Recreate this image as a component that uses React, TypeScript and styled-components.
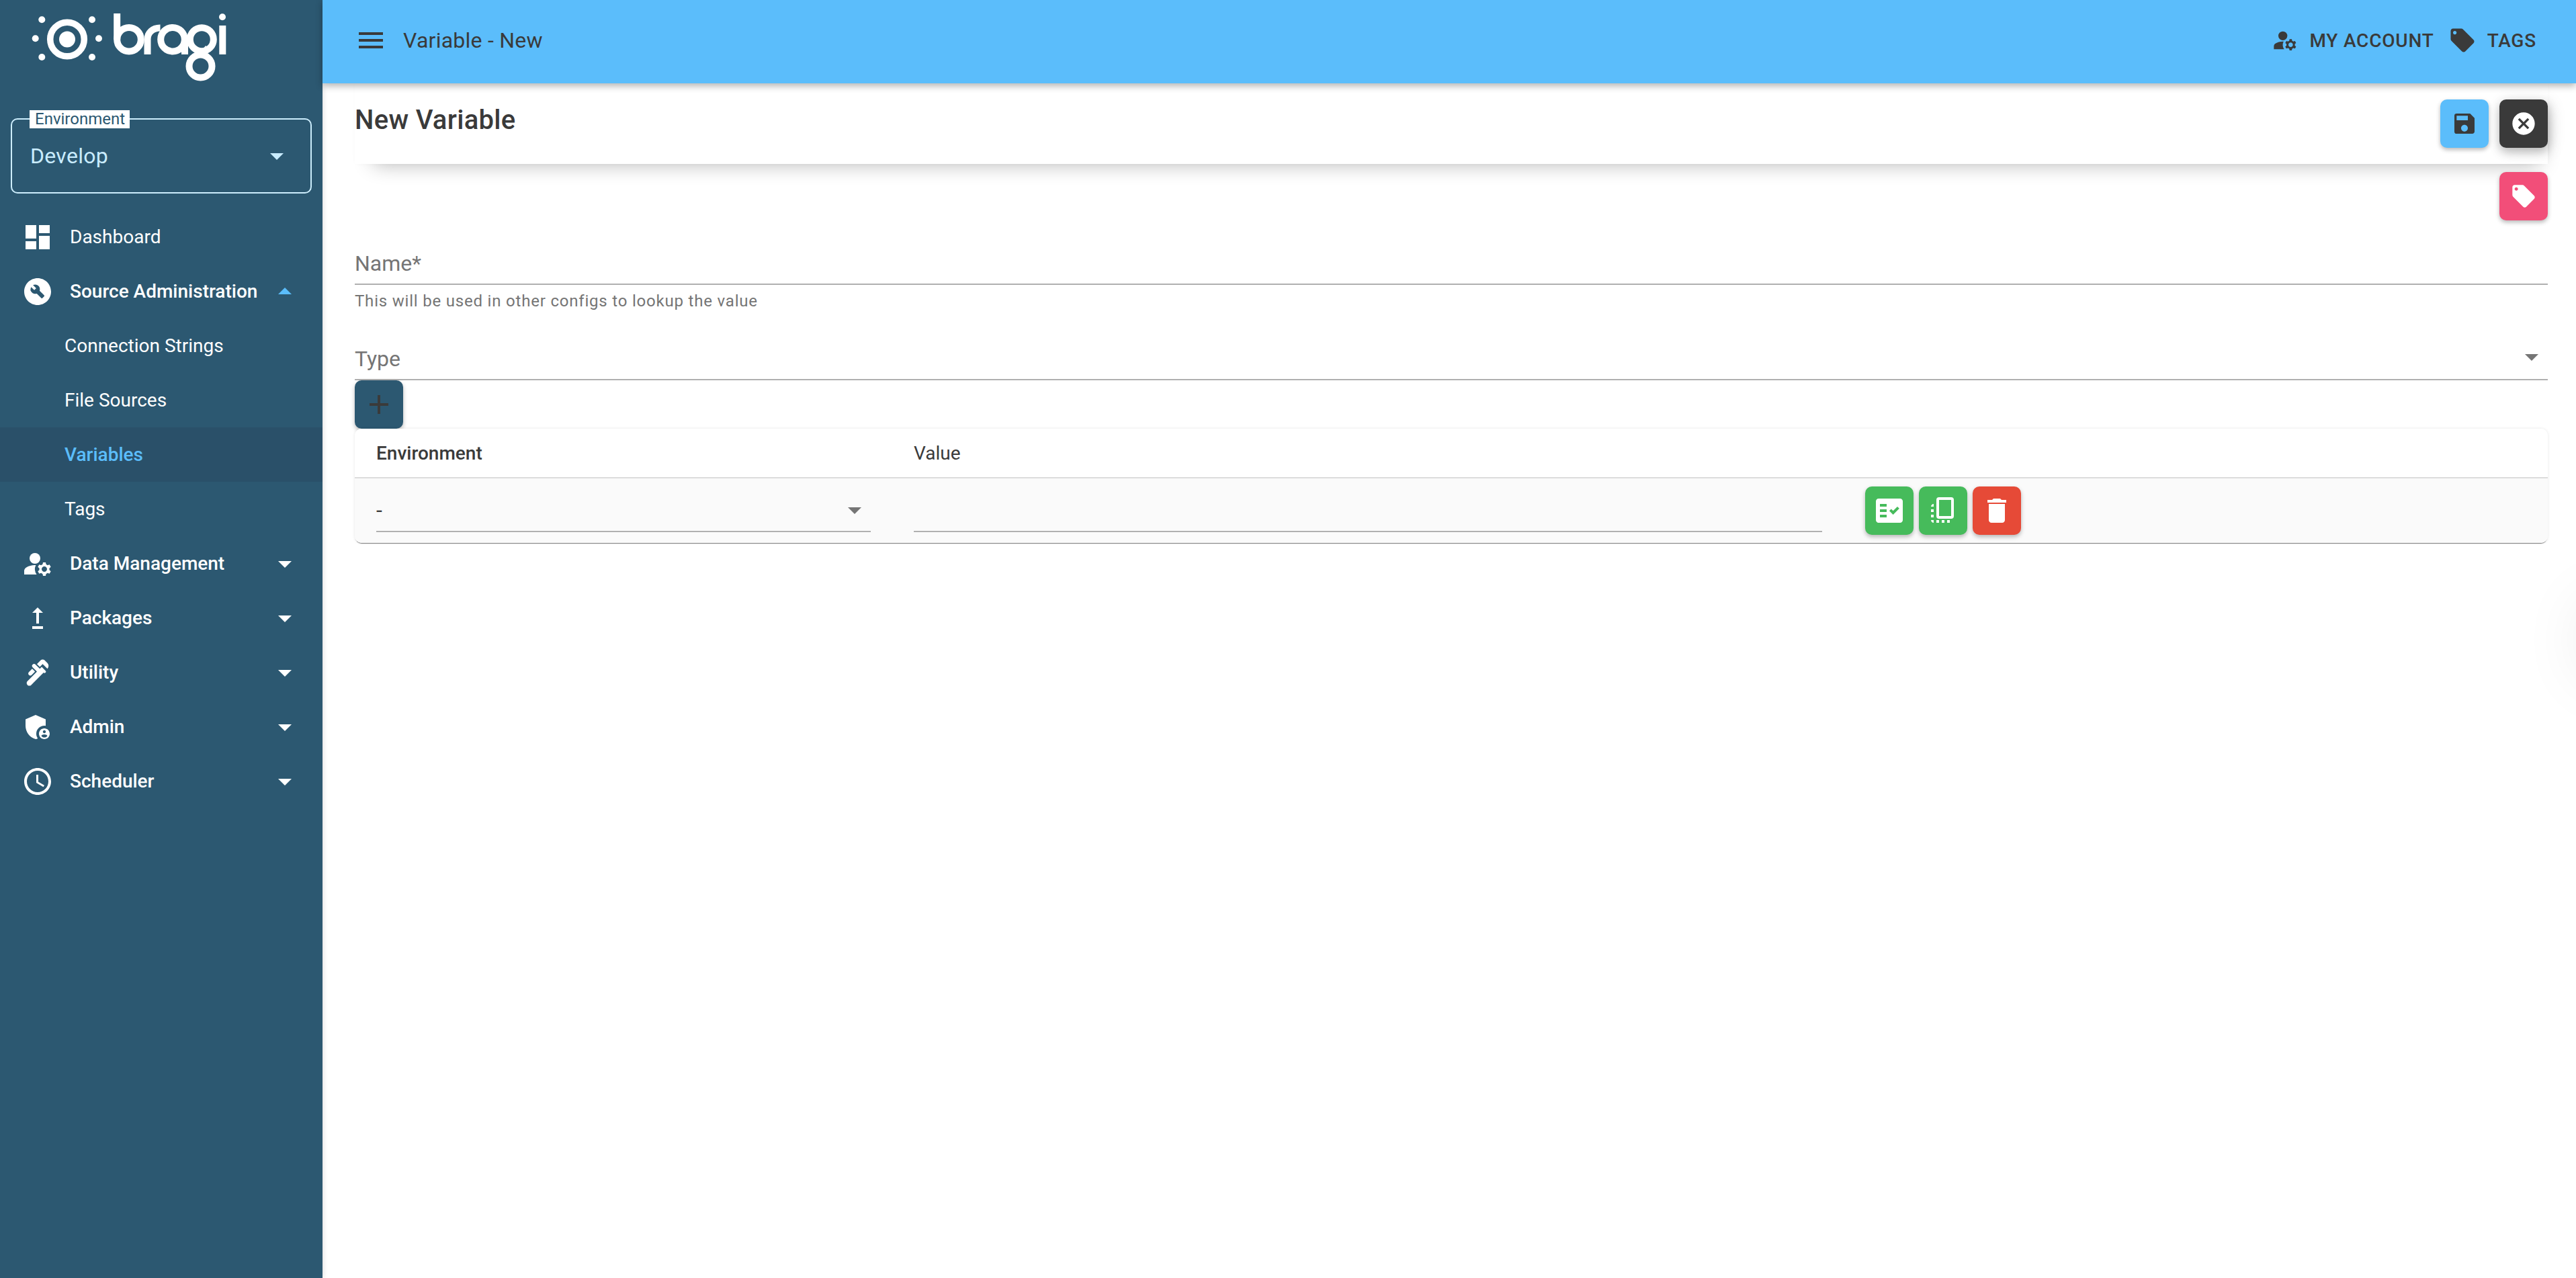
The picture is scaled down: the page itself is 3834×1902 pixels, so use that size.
import React from 'react';
import styled, { createGlobalStyle } from 'styled-components';
import {
	MdAdd,
	MdAdminPanelSettings,
	MdArrowDropDown,
	MdArrowDropUp,
	MdBuildCircle,
	MdCancel,
	MdDashboard,
	MdDelete,
	MdFactCheck,
	MdLocalOffer,
	MdManageAccounts,
	MdMenu,
	MdPlumbing,
	MdSave,
	MdSchedule,
	MdUpgrade,
} from 'react-icons/md';

const BLUE = '#5bbdfb';
const NAVY = '#2c5871';
const INK = '#3a3a3a';
const GREY = '#757575';

const GlobalStyle = createGlobalStyle`
	html, body, #root {
		height: 100%;
		margin: 0;
	}
	body {
		background: #fff;
		color: ${INK};
		font-family: Roboto, "Liberation Sans", sans-serif;
		overflow: hidden;
	}
`;

const Page = styled.div`
	display: flex;
	height: 100vh;
	position: relative;
	overflow: hidden;
`;

const Sidebar = styled.aside`
	width: 480px;
	flex: none;
	background: ${NAVY};
	box-shadow: 0 0 8px rgba(0, 0, 0, 0.18);
	display: flex;
	flex-direction: column;
	z-index: 1;
`;

const LogoMark = styled.svg`
	display: block;
	width: 310px;
	height: 115px;
	margin: 10px 0 0 40px;
	flex: none;
`;

const EnvSelect = styled.div`
	position: relative;
	box-sizing: border-box;
	width: 448px;
	height: 112px;
	margin: 51px 0 0 16px;
	padding: 0 26px 0 27px;
	border: 2px solid #cdeefd;
	border-radius: 10px;
	display: flex;
	align-items: center;
	justify-content: space-between;
	color: #c9ecff;
	font-size: 32px;
	letter-spacing: 0.3px;
`;

const EnvLabel = styled.span`
	position: absolute;
	left: 26px;
	top: -14px;
	height: 27px;
	line-height: 27px;
	padding: 0 7px 0 8px;
	background: #fff;
	color: ${NAVY};
	font-size: 24px;
	letter-spacing: 0;
`;

const Nav = styled.nav`
	margin-top: 24px;
	display: flex;
	flex-direction: column;
`;

const NavRow = styled.div<{ $active?: boolean; $sub?: boolean; $light?: boolean }>`
	height: 81px;
	display: flex;
	align-items: center;
	gap: 24px;
	padding: 0 32px 0 ${p => (p.$sub ? '96px' : '32px')};
	background: ${p => (p.$active ? '#2a5069' : 'transparent')};
	color: ${p => (p.$active ? BLUE : '#fff')};
	font-size: 28px;
	font-weight: ${p => ((p.$sub && !p.$active) || p.$light ? 400 : 500)};
	white-space: nowrap;

	svg {
		flex: none;
	}
`;

const NavLabel = styled.span`
	flex: 1;
	min-width: 0;
`;

const Content = styled.div`
	flex: 1;
	min-width: 0;
	display: flex;
	flex-direction: column;
`;

const AppBar = styled.header`
	height: 124px;
	flex: none;
	box-sizing: border-box;
	padding: 0 59px 4px 48px;
	background: ${BLUE};
	color: ${INK};
	display: flex;
	align-items: center;
	box-shadow: 0 4px 10px rgba(0, 0, 0, 0.3);
	position: relative;
	z-index: 2;
`;

const AppTitle = styled.h1`
	margin: 0 0 0 24px;
	font-size: 32px;
	font-weight: 400;
	line-height: 48px;
	letter-spacing: 0.24px;
`;

const AppLinks = styled.div`
	margin-left: auto;
	display: flex;
	align-items: center;
	gap: 21px;
`;

const AppLink = styled.span<{ $gap: number }>`
	display: flex;
	align-items: center;
	gap: ${p => p.$gap}px;
	font-size: 28px;
	font-weight: 500;
	letter-spacing: 0.8px;
	text-transform: uppercase;
`;

const Form = styled.main`
	flex: 1;
	padding: 0 42px 0 48px;
	display: flex;
	flex-direction: column;
`;

const TitlePanel = styled.section`
	height: 120px;
	flex: none;
	box-sizing: border-box;
	padding-top: 24px;
	display: flex;
	justify-content: space-between;
	align-items: flex-start;
	background: #fff;
	box-shadow: 8px 20px 30px -20px rgba(0, 0, 0, 0.3), 0 0 6px rgba(0, 0, 0, 0.02);
`;

const PanelTitle = styled.h2`
	margin: 0;
	font-size: 40px;
	font-weight: 500;
	line-height: 62px;
	letter-spacing: 0.3px;
`;

const PanelActions = styled.div`
	display: flex;
	gap: 16px;
`;

const SquareButton = styled.button<{ $bg: string; $fg: string; $raised?: boolean }>`
	width: 72px;
	height: 72px;
	flex: none;
	padding: 0;
	border: 0;
	border-radius: 10px;
	display: flex;
	align-items: center;
	justify-content: center;
	background: ${p => p.$bg};
	color: ${p => p.$fg};
	box-shadow: ${p =>
		p.$raised
			? '0 6px 14px rgba(0, 0, 0, 0.22), 4px 4px 24px rgba(0, 0, 0, 0.12)'
			: '0 3px 6px rgba(0, 0, 0, 0.28)'};
`;

const TagRow = styled.div`
	margin-top: 12px;
	display: flex;
	justify-content: flex-end;
`;

const Field = styled.div<{ $top: number }>`
	margin-top: ${p => p.$top}px;
	height: 56px;
	box-sizing: border-box;
	padding-bottom: 6px;
	border-bottom: 2px solid #b0b0b0;
	display: flex;
	align-items: center;
	justify-content: space-between;
	color: ${GREY};
	font-size: 32px;
`;

const FieldArrow = styled.span<{ $lift?: number }>`
	display: flex;
	margin-top: ${p => -(p.$lift ?? 0)}px;
	color: ${GREY};
`;

const Helper = styled.p`
	margin: 10px 0 0;
	font-size: 24px;
	line-height: 28px;
	letter-spacing: 0.8px;
	color: ${GREY};
`;

const AddRow = styled.div`
	display: flex;
`;

const Table = styled.section`
	border-radius: 10px;
	background: #fff;
	box-shadow: 0 2px 1px -1px rgba(0, 0, 0, 0.5), 0 0 4px rgba(0, 0, 0, 0.1);
	overflow: hidden;
`;

const TableRow = styled.div<{ $head?: boolean }>`
	display: grid;
	grid-template-columns: 736px 1352px auto;
	column-gap: 64px;
	align-items: center;
	height: ${p => (p.$head ? '72px' : '96px')};
	padding-left: 32px;
	background: ${p => (p.$head ? '#fff' : '#fafafa')};
	border-bottom: ${p => (p.$head ? '2px solid #dcdcdc' : '0')};
	font-size: 28px;
`;

const HeadCell = styled.div<{ $strong?: boolean }>`
	font-weight: ${p => (p.$strong ? 500 : 400)};
`;

const CellInput = styled.div`
	height: 64px;
	box-sizing: border-box;
	border-bottom: 2px solid #b0b0b0;
	display: flex;
	align-items: center;
	justify-content: space-between;
	font-size: 32px;
	color: ${INK};
`;

const RowActions = styled.div`
	display: flex;
	gap: 8px;
`;

// a floating button parked just off the right edge, only its shadow shows
const OffscreenFab = styled.div`
	position: absolute;
	left: 3860px;
	top: 912px;
	width: 80px;
	height: 80px;
	border-radius: 50%;
	box-shadow: 0 0 110px rgba(0, 0, 0, 0.2);
`;

const BragiLogo = () => (
	<LogoMark viewBox="40 10 310 115" fill="none" stroke="#fff" strokeWidth="10">
		<circle cx="100" cy="58.5" r="25.3" strokeWidth="9.5" />
		<circle cx="100" cy="58.5" r="12" fill="#fff" stroke="none" />
		{[[62.3, 29.3], [137, 29.3], [52.7, 57.3], [147, 57.3], [62.3, 85], [137, 85]].map(([cx, cy]) => (
			<circle key={`${cx}-${cy}`} cx={cx} cy={cy} r="5" fill="#fff" stroke="none" />
		))}
		<path d="M174.2 20V58.7" />
		<circle cx="192" cy="58.7" r="17.8" />
		<path d="M219.5 81V58.7C219.5 49 227 41.5 238.5 41.5" />
		<circle cx="257" cy="58.7" r="17.8" />
		<path d="M275 58.7V81" />
		<circle cx="300.3" cy="58.7" r="17.5" />
		<circle cx="298.5" cy="98.5" r="17" />
		<path d="M310 71C306 76 303 79 298.5 81.5" />
		<path d="M331.3 38V81" />
		<circle cx="331" cy="25.3" r="5" fill="#fff" stroke="none" />
	</LogoMark>
);

const DuplicateIcon = () => (
	<svg width="48" height="48" viewBox="0 0 24 24" fill="currentColor">
		<path d="M3 13h2v-2H3v2zm0 4h2v-2H3v2zm2 4v-2H3c0 1.1.89 2 2 2zM3 9h2V7c-1.1 0-2 .9-2 2zm12 12h2v-2h-2v2zm-4 0h2v-2h-2v2zm-4 0h2v-2H7v2z" />
		<rect x="8" y="3" width="11" height="14" rx="1" fill="none" stroke="currentColor" strokeWidth="2" />
	</svg>
);

type NavItem = {
	label: string;
	icon?: React.ReactNode;
	caret?: 'up' | 'down';
	sub?: boolean;
	active?: boolean;
	light?: boolean;
};

const navItems: NavItem[] = [
	{ label: 'Dashboard', icon: <MdDashboard size={48} />, light: true },
	{ label: 'Source Administration', icon: <MdBuildCircle size={48} />, caret: 'up' },
	{ label: 'Connection Strings', sub: true },
	{ label: 'File Sources', sub: true },
	{ label: 'Variables', sub: true, active: true },
	{ label: 'Tags', sub: true },
	{ label: 'Data Management', icon: <MdManageAccounts size={48} />, caret: 'down' },
	{ label: 'Packages', icon: <MdUpgrade size={48} />, caret: 'down' },
	{ label: 'Utility', icon: <MdPlumbing size={48} />, caret: 'down' },
	{ label: 'Admin', icon: <MdAdminPanelSettings size={48} />, caret: 'down' },
	{ label: 'Scheduler', icon: <MdSchedule size={48} />, caret: 'down' },
];

const App: React.FC = () => {
	return (
		<Page>
			<GlobalStyle />
			<Sidebar>
				<BragiLogo />
				<EnvSelect>
					<EnvLabel>Environment</EnvLabel>
					Develop
					<MdArrowDropDown size={48} />
				</EnvSelect>
				<Nav>
					{navItems.map(item => (
						<NavRow key={item.label} $sub={item.sub} $active={item.active} $light={item.light}>
							{item.icon}
							<NavLabel>{item.label}</NavLabel>
							{item.caret === 'up' && <MdArrowDropUp size={48} color={BLUE} />}
							{item.caret === 'down' && <MdArrowDropDown size={48} />}
						</NavRow>
					))}
				</Nav>
			</Sidebar>
			<Content>
				<AppBar>
					<MdMenu size={48} />
					<AppTitle>Variable - New</AppTitle>
					<AppLinks>
						<AppLink $gap={16}><MdManageAccounts size={40} />My Account</AppLink>
						<AppLink $gap={16}><MdLocalOffer size={42} />Tags</AppLink>
					</AppLinks>
				</AppBar>
				<Form>
					<TitlePanel>
						<PanelTitle>New Variable</PanelTitle>
						<PanelActions>
							<SquareButton $bg={BLUE} $fg={INK}><MdSave size={40} /></SquareButton>
							<SquareButton $bg={INK} $fg="#fff" $raised><MdCancel size={40} /></SquareButton>
						</PanelActions>
					</TitlePanel>
					<TagRow>
						<SquareButton $bg="#f24e79" $fg="#fff"><MdLocalOffer size={40} /></SquareButton>
					</TagRow>
					<Field $top={40}>Name*</Field>
					<Helper>This will be used in other configs to lookup the value</Helper>
					<Field $top={48}>
						Type
						<FieldArrow $lift={6}><MdArrowDropDown size={48} /></FieldArrow>
					</Field>
					<AddRow>
						<SquareButton $bg={NAVY} $fg={INK}><MdAdd size={48} /></SquareButton>
					</AddRow>
					<Table>
						<TableRow $head>
							<HeadCell $strong>Environment</HeadCell>
							<HeadCell>Value</HeadCell>
						</TableRow>
						<TableRow>
							<CellInput>
								-
								<FieldArrow><MdArrowDropDown size={48} /></FieldArrow>
							</CellInput>
							<CellInput />
							<RowActions>
								<SquareButton $bg="#46bb5b" $fg="#fff"><MdFactCheck size={48} /></SquareButton>
								<SquareButton $bg="#46bb5b" $fg="#fff"><DuplicateIcon /></SquareButton>
								<SquareButton $bg="#e64a37" $fg="#fff"><MdDelete size={48} /></SquareButton>
							</RowActions>
						</TableRow>
					</Table>
				</Form>
			</Content>
			<OffscreenFab />
		</Page>
	);
};

export default App;
